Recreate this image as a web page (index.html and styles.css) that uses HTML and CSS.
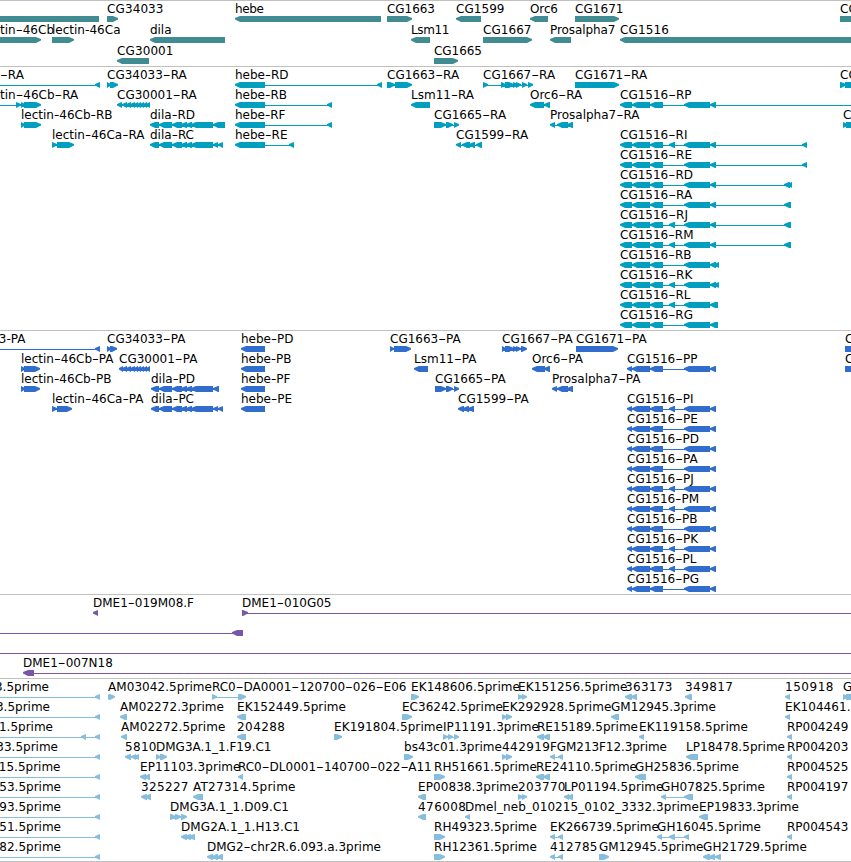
FILE: index.html
```
<!DOCTYPE html>
<html lang="en">
<head>
    <meta charset="UTF-8">
    <title>Genome viewer</title>
    <link rel="stylesheet" href="styles.css">
</head>
<body>
    <div class="viewer">
        <section class="track track-gene" data-track="gene"></section>
        <section class="track track-transcript" data-track="transcript"></section>
        <section class="track track-protein" data-track="protein"></section>
        <section class="track track-clone" data-track="clone"></section>
        <section class="track track-est" data-track="est"></section>
    </div>
    <script src="tracks.js"></script>
</body>
</html>
```

FILE: styles.css
```
body {
    margin: 0;
    background: #fff;
    color: #000;
    font-family: "DejaVu Sans", sans-serif;
    font-size: 12px;
}
.viewer {
    display: flex;
    flex-direction: column;
    height: 862px;
    overflow: hidden;
    box-sizing: border-box;
    border-bottom: 1px solid #c0c0c0;
}
.track {
    flex: none;
    box-sizing: border-box;
    border-top: 1px solid #c0c0c0;
    padding-bottom: 3px;
}
.track-gene { color: #408c92; padding-bottom: 2px; }
.track-transcript { color: #009fbf; }
.track-protein { color: #306dcc; }
.track-clone { color: #7858a6; }
.track-est { color: #87bddd; padding-bottom: 0; }

.row {
    display: block;
    width: 100%;
    height: 20px;
    overflow: visible;
}
.track-gene .row { height: 21px; }
.row text { fill: #000; white-space: pre; }
.shape { fill: currentColor; }
```

FILE: tracks.js
```
// feature: [label, label start, label end, strand, exons]
// label end 0 = natural width
const LEFT = -20;
const RIGHT = 870;

// shared exon structures
const hebe = '235-265 ';
const dila = '159-172 172-182 181-187 186-192 191-213 ';
const cg30001 = '122-127 126-131 130-135 134-138 137-141 140-144 143-147 146-150';

function cg1516(name, start, end, small, tail) {
    const first = start === 620 ? '620-632' : '627-632';
    return ['CG1516-' + name, start, end, '<',
        first + ' 632-650 650-663 ' + (small ? '669-675 ' : '') + '684-710 ' + tail];
}

function rp(label) {
    return [label, 787, 0, '<', '787-792'];
}

function prime(label, end, extra) {
    return [label, null, end, '<', '-20--15 ' + (extra || '') + '95-100'];
}

const tracks = {
    gene: [
        [
            ['', 0, 0, '<', '-20-99'],
            ['CG34033', 107, 163, '>', '107-118'],
            ['hebe', 235, 263.5, '<', '235-381'],
            ['CG1663', 387, 434.5, '>', '387-412'],
            ['CG1599', 456, 504, '<', '456-481'],
            ['Orc6', 530, 557.5, '<', '530-548'],
            ['CG1671', 575, 623, '>', '575-619'],
            ['CG', 840, 0, '>', '840-870'],
        ],
        [
            ['tin-46Cb', 0, 53.5, '>', '-20-41'],
            ['lectin-46Ca', 52, 120, '>', '52-74'],
            ['dila', 150, 171, '<', '150-225'],
            ['Lsm11', 411, 449, '<', '411-430'],
            ['CG1667', 483, 531, '>', '483-532'],
            ['Prosalpha7', 550, 615, '<', '550-571'],
            ['CG1516', 620, 668.5, '<', '620-870'],
        ],
        [
            ['CG30001', 117, 173, '<', '117-149'],
            ['CG1665', 434, 481.5, '>', '434-458'],
        ],
    ],
    transcript: [
        [
            ['-RA', 0, 23.5, '<', '-20--15 95-100'],
            ['CG34033-RA', 107, 188, '>', '107-111 110-118'],
            ['hebe-RD', 235, 288, '<', hebe + '377-382'],
            ['CG1663-RA', 387, 459.5, '>', '387-395 395-412'],
            ['CG1667-RA', 483, 555.5, '>', '483-488 501-506 505-514 513-518 516-521 522-527 528-533'],
            ['CG1671-RA', 575, 648, '>', '575-619'],
            ['CG', 840, 0, '>', '840-846 845-870'],
        ],
        [
            ['tin-46Cb-RA', 0, 77.7, '>', '-20--15 16-21 21-25 24-41'],
            ['CG30001-RA', 117, 198, '<', '117-122 ' + cg30001],
            ['hebe-RB', 235, 286.5, '<', hebe + '327-332'],
            ['Lsm11-RA', 411, 473.5, '<', '411-430'],
            ['Orc6-RA', 530, 582, '<', '530-544 544-550'],
            cg1516('RP', 620, 691, false, '710-716 865-870'),
        ],
        [
            ['lectin-46Cb-RB', 21, 112, '>', '21-25 24-41'],
            ['dila-RD', 150, 194.5, '<', '150-159 ' + dila + '213-225'],
            ['hebe-RF', 235, 285, '<', hebe + '327-332'],
            ['CG1665-RA', 434, 506.5, '>', '434-446 446-453 454-459'],
            ['Prosalpha7-RA', 550, 639, '<', '550-555 557-568 567-573'],
            ['CG', 843, 0, '>', '843-848 846-870'],
        ],
        [
            ['lectin-46Ca-RA', 52, 144, '>', '52-57 57-74'],
            ['dila-RC', 150, 193.5, '<', '150-159 ' + dila + '213-218 218-223'],
            ['hebe-RE', 235, 287, '<', hebe + '289-294'],
            ['CG1599-RA', 456, 529, '<', '456-461 462-470 469-475 476-482'],
            cg1516('RI', 620, 687, true, '710-716 802-807'),
        ],
        [cg1516('RE', 620, 691.5, false, '710-716 802-807')],
        [cg1516('RD', 620, 692.5, false, '710-716 784-790 788-792')],
        [cg1516('RA', 620, 693, false, '710-716 784-791')],
        [cg1516('RJ', 620, 688, true, '710-716 784-791')],
        [cg1516('RM', 620, 693, true, '710-716 784-791')],
        [cg1516('RB', 620, 691, false, '710-716 714-719')],
        [cg1516('RK', 620, 692, true, '710-716 714-719')],
        [cg1516('RL', 620, 690, true, '710-718')],
        [cg1516('RG', 620, 692.5, false, '710-718')],
    ],
    protein: [
        [
            ['3-PA', null, 25, '<', '-20--15 95-100'],
            ['CG34033-PA', 107, 187, '>', '107-111 110-117'],
            ['hebe-PD', 241, 293, '<', '241-265'],
            ['CG1663-PA', 390, 462, '>', '390-394 394-411'],
            ['CG1667-PA', 502, 574, '>', '502-506 505-514 513-518 516-521 521-527'],
            ['CG1671-PA', 576, 648, '>', '576-618'],
            ['CG', 845, 0, '>', '845-870'],
        ],
        [
            ['lectin-46Cb-PA', 21, 113, '>', '21-25 24-40'],
            ['CG30001-PA', 119, 199, '<', '119-123 ' + cg30001],
            ['hebe-PB', 241, 291, '<', '241-265'],
            ['Lsm11-PA', 414, 476, '<', '414-428'],
            ['Orc6-PA', 532, 583, '<', '532-545 544-550'],
            cg1516('PP', 627, 697, false, '710-716'),
            ['CG', 845, 0, '>', '845-870'],
        ],
        [
            ['lectin-46Cb-PB', 21, 111, '>', '21-25 24-40'],
            ['dila-PD', 151, 194.5, '<', '151-159 ' + dila + '213-219'],
            ['hebe-PF', 241, 290, '<', '241-265'],
            ['CG1665-PA', 435, 507, '>', '435-446 446-453 454-459'],
            ['Prosalpha7-PA', 552, 640, '<', '552-557 557-568 567-573'],
        ],
        [
            ['lectin-46Ca-PA', 52, 143, '>', '52-57 57-72'],
            ['dila-PC', 151, 193.5, '<', '151-159 ' + dila + '213-218 218-223'],
            ['hebe-PE', 241, 291.5, '<', '241-265'],
            ['CG1599-PA', 458, 530, '<', '458-464 463-469 468-474'],
            cg1516('PI', 627, 693, true, '710-716'),
        ],
        [cg1516('PE', 627, 697.5, false, '710-716')],
        [cg1516('PD', 627, 698.5, false, '710-716')],
        [cg1516('PA', 627, 699, false, '710-716')],
        [cg1516('PJ', 627, 694, true, '710-716')],
        [cg1516('PM', 627, 698.5, true, '710-716')],
        [cg1516('PB', 627, 697, false, '710-716')],
        [cg1516('PK', 627, 698, true, '710-716')],
        [cg1516('PL', 627, 696, true, '710-716')],
        [cg1516('PG', 627, 698.5, false, '710-716')],
    ],
    clone: [
        [
            ['DME1-019M08.F', 93, 193.5, '<', '93-98'],
            ['DME1-010G05', 242, 331, '>', '242-248 865-870'],
        ],
        [['', 0, 0, '<', '-20--15 232-243']],
        [['', 0, 0, '<', '-20--15 865-870']],
        [['DME1-007N18', 23, 112.5, '<', '23-34 865-870']],
    ],
    est: [
        [
            prime('3.5prime', 48.5),
            ['AM03042.5prime', 108, 211.5, '>', '108-111 109-115'],
            ['RC0-DA0001-120700-026-E06', 212, 407.5, '>', '212-217 238-246'],
            ['EK148606.5prime', 411, 519.5, '>', '411-419'],
            ['EK151256.5prime', 518, 627, '>', '518-523 522-527'],
            ['363173', 625, 672, '<', '625-632 631-637'],
            ['349817', 685, 732.5, '<', '685-692'],
            ['150918', 785, 833, '<', '785-790'],
            ['G', 843, 0, '>', '843-848 846-870'],
        ],
        [
            prime('3.5prime', 49.5),
            ['AM02272.3prime', 120, 223.5, '<', '120-127'],
            ['EK152449.5prime', 237, 345.5, '<', '237-246'],
            ['EC36242.5prime', 402, 502.5, '>', '402-412'],
            ['EK292928.5prime', 502, 611, '>', '502-507 506-512'],
            ['GM12945.3prime', 611, 715.5, '<', '611-619'],
            ['EK104461.', 785, 850, '<', '785-790'],
        ],
        [
            prime('1.5prime', 52.5, '81-86 '),
            ['AM02272.5prime', 121, 225, '<', '121-127'],
            ['204288', 237, 284.5, '<', '237-246'],
            ['EK191804.5prime', 334, 442.5, '>', '334-342'],
            ['IP11191.3prime', 443, 538.5, '>', '443-448 448-453 454-459'],
            ['RE15189.5prime', 537, 637.5, '<', '537-544 543-550'],
            ['EK119158.5prime', 639, 747.5, '<', '639-644'],
            rp('RP004249'),
        ],
        [
            prime('33.5prime', 57.5),
            ['5810', 125, 156, '<', '125-131 131-136 134-139'],
            ['DMG3A.1_1.F19.C1', 156, 271, '>', '156-161 160-167'],
            ['bs43c01.3prime', 404, 501.5, '>', '404-413'],
            ['442919', 502, 549.5, '>', '502-507 506-512'],
            ['FGM213F12.3prime', 550, 666.5, '<', '550-555 558-563'],
            ['LP18478.5prime', 686, 784.5, '<', '686-698'],
            rp('RP004203'),
        ],
        [
            prime('15.5prime', 60),
            ['EP11103.3prime', 140, 240, '<', '140-146 144-150'],
            ['RC0-DL0001-140700-022-A11', 238, 433, '<', '238-243'],
            ['RH51661.5prime', 434, 536.5, '>', '434-445'],
            ['RE24110.5prime', 536, 636.5, '<', '536-544 543-550'],
            ['GH25836.5prime', 635, 738.5, '<', '635-646'],
            rp('RP004525'),
        ],
        [
            prime('53.5prime', 60.5),
            ['325227', 141, 188, '<', '141-147 145-151'],
            ['AT27314.5prime', 193, 295, '<', '193-203'],
            ['EP00838.3prime', 418, 518, '<', '418-426'],
            ['203770', 518, 565, '>', '518-523 522-527'],
            ['LP01194.5prime', 564, 663, '<', '564-569 567-573'],
            ['GH07825.5prime', 661, 764.5, '<', '661-666 684-693'],
            rp('RP004197'),
        ],
        [
            prime('93.5prime', 60.5),
            ['DMG3A.1_1.D09.C1', 170, 288.5, '>', '170-176 175-181 181-187'],
            ['476008', 418, 465.5, '<', '418-426'],
            ['Dmel_neb_010215_0102_3332.3prime', 465, 698.5, '<', '465-470'],
            ['EP19833.3prime', 699, 798.5, '<', '699-708'],
        ],
        [
            prime('51.5prime', 60.5),
            ['DMG2A.1_1.H13.C1', 181, 299.5, '<', '181-187 185-191 189-195'],
            ['RH49323.5prime', 434, 536.5, '>', '434-445'],
            ['EK266739.5prime', 550, 658.5, '<', '550-555 558-563'],
            ['GH16045.5prime', 657, 760.5, '<', '657-662 669-675 684-689'],
            rp('RP004543'),
        ],
        [
            prime('82.5prime', 60.5),
            ['DMG2-chr2R.6.093.a.3prime', 207, 380.5, '<', '207-213 212-218 217-223'],
            ['RH12361.5prime', 434, 536.5, '>', '434-445'],
            ['412785', 550, 597, '<', '550-555 558-563'],
            ['GM12945.5prime', 599, 703, '>', '599-609'],
            ['GH21729.5prime', 703, 806.5, '<', '703-710 709-715 715-721'],
        ],
    ],
};

// exon box, 6px high, pointed on the strand side
function exonPath(start, end, strand) {
    const tip = Math.min(end - start, 5);
    if (strand === '<') {
        return `M${start} 17L${start + tip} 15H${end}V21H${start + tip}L${start} 18.6Z`;
    }
    return `M${end} 17L${end - tip} 15H${start}V21H${end - tip}L${end} 18.6Z`;
}

function labelText([label, start, end]) {
    if (!label) return '';
    if (start === null) {
        return `<text x="${end + 0.5}" y="12" text-anchor="end">${label}</text>`;
    }
    const length = end ? ` data-length="${end - start + 0.5}"` : '';
    return `<text x="${start}" y="12"${length}>${label}</text>`;
}

function featureSvg(feature) {
    const strand = feature[3];
    const exons = feature[4].split(' ').map(s => s.match(/^(-?\d+)-(-?\d+)$/).slice(1).map(Number));
    const from = Math.max(exons[0][0], LEFT);
    const to = Math.min(exons[exons.length - 1][1], RIGHT);
    const path = exons.map(([s, e]) => exonPath(s, e, strand)).join('');
    return `<rect class="shape" x="${from + 1}" y="18" width="${to - from - 2}" height="1"/>`
        + `<path class="shape" d="${path}"/>` + labelText(feature);
}

// widen the hyphens first, otherwise spread the letters
function fitLabel(text) {
    const length = Number(text.dataset.length);
    const label = text.textContent;
    const hyphens = label.split('-').length - 1;
    const extra = length - text.getComputedTextLength();
    if (hyphens && extra > 0) {
        const width = 4.33 + Math.min(extra / hyphens, 3.5);
        text.innerHTML = label.replace(/-/g,
            `<tspan textLength="${width.toFixed(2)}" lengthAdjust="spacingAndGlyphs">-</tspan>`);
    } else {
        text.setAttribute('textLength', length);
    }
}

document.querySelectorAll('.track').forEach(section => {
    section.innerHTML = tracks[section.dataset.track]
        .map(row => `<svg class="row">${row.map(featureSvg).join('')}</svg>`)
        .join('');
});
document.querySelectorAll('text[data-length]').forEach(fitLabel);
```
